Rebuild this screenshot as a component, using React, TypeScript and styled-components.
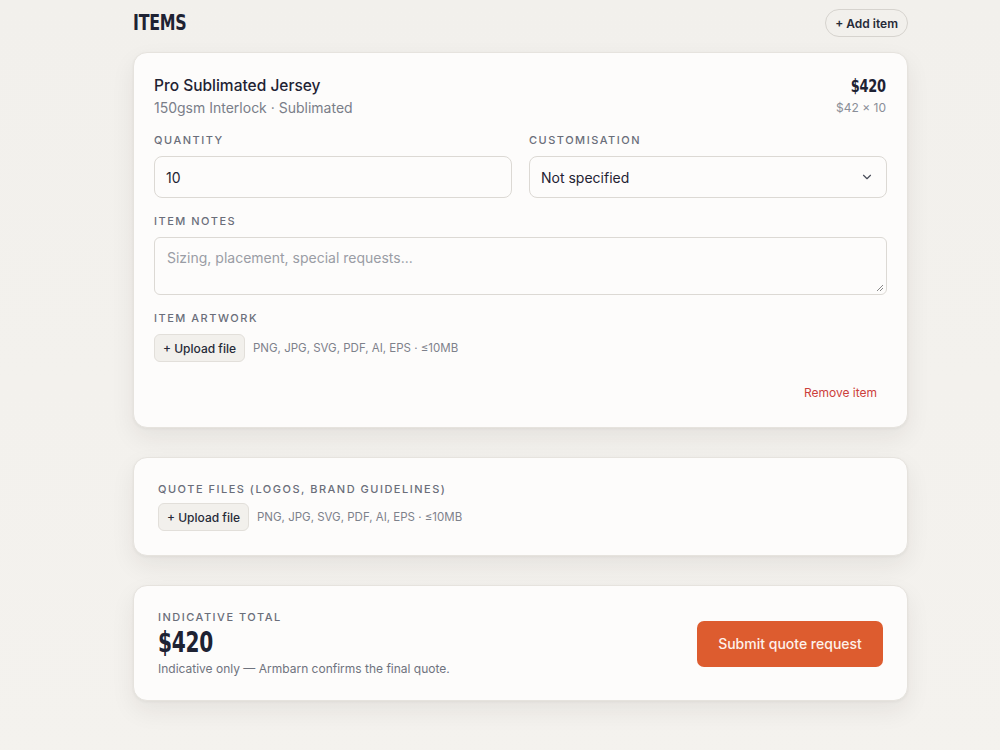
import * as React from 'react'
import styled, { createGlobalStyle } from 'styled-components'

const GlobalStyle = createGlobalStyle`
  html, body {
    margin: 0;
    padding: 0;
  }
  body {
    background: linear-gradient(180deg, #f2f0ec 0%, #f4f2ee 100%);
    font-family: 'Inter', 'Noto Sans', sans-serif;
    color: #1f2333;
    min-height: 750px;
  }
`

const Page = styled.div`
  width: 775px;
  margin: 0 0 0 133px;
  padding: 9px 0 40px 0;
  display: flex;
  flex-direction: column;
`

const Header = styled.div`
  display: flex;
  flex-direction: row;
  justify-content: space-between;
  align-items: center;
  height: 28px;
  margin-bottom: 15px;
`

// condensed display face, squeezed to match the narrow headline font
const Display = styled.span<{ $size: number; $origin: string }>`
  display: inline-block;
  font-family: 'DejaVu Sans Condensed', 'DejaVu Sans', sans-serif;
  font-stretch: condensed;
  font-weight: 700;
  font-size: ${p => p.$size}px;
  line-height: ${p => p.$size + 4}px;
  letter-spacing: -0.3px;
  color: #1e2233;
  transform: scaleX(0.8);
  transform-origin: ${p => p.$origin};
`

const PillButton = styled.button`
  font-family: 'Inter', sans-serif;
  font-size: 12px;
  font-weight: 600;
  color: #262a38;
  background: transparent;
  border: 1px solid #d6d3ce;
  border-radius: 999px;
  height: 28px;
  padding: 0 9px;
`

const Card = styled.div<{ $pad: number }>`
  background: #fdfcfb;
  border: 1px solid #e6e3de;
  border-radius: 14px;
  box-shadow: 0 10px 24px rgba(40, 35, 25, 0.07), 0 1px 3px rgba(40, 35, 25, 0.05);
  padding: ${p => p.$pad}px;
  margin-bottom: 29px;
  display: flex;
  flex-direction: column;
`

const ItemHead = styled.div`
  display: flex;
  justify-content: space-between;
  align-items: flex-start;
  margin-top: 2px;
`

const Title = styled.div`
  font-size: 15.5px;
  font-weight: 500;
  color: #1f2333;
  line-height: 22px;
`

const Sub = styled.div`
  font-size: 14px;
  color: #7a7e89;
  line-height: 20px;
  margin-top: 1px;
`

const PriceCol = styled.div`
  display: flex;
  flex-direction: column;
  align-items: flex-end;
  padding-right: 1px;
`

const PriceSub = styled.div`
  font-size: 12px;
  color: #8a8e98;
  margin-top: 3px;
`

const Grid = styled.div`
  display: grid;
  grid-template-columns: 1fr 1fr;
  gap: 17px;
  margin-top: 15px;
`

const Field = styled.div<{ $mt?: number }>`
  display: flex;
  flex-direction: column;
  margin-top: ${p => p.$mt || 0}px;
`

const Label = styled.div<{ $mb?: number }>`
  font-size: 11px;
  font-weight: 500;
  letter-spacing: 1.5px;
  text-transform: uppercase;
  color: #6a6e7a;
  line-height: 14px;
  margin-bottom: ${p => (p.$mb === undefined ? 9 : p.$mb)}px;
`

const Input = styled.div`
  height: 42px;
  box-sizing: border-box;
  border: 1px solid #dcd9d4;
  border-radius: 8px;
  background: #fdfcfb;
  display: flex;
  align-items: center;
  justify-content: space-between;
  padding: 0 12px 0 11px;
  font-size: 14px;
  color: #1f2333;
`

const TextArea = styled.div`
  height: 58px;
  box-sizing: border-box;
  border: 1px solid #dcd9d4;
  border-radius: 6px;
  padding: 11px 12px;
  font-size: 14px;
  color: #9a9da5;
  position: relative;
`

const Grip = styled.svg`
  position: absolute;
  right: 2px;
  bottom: 2px;
`

const UploadRow = styled.div`
  display: flex;
  align-items: center;
  gap: 8px;
`

const UploadButton = styled.button`
  font-family: 'Inter', sans-serif;
  font-size: 12px;
  font-weight: 500;
  color: #262a38;
  background: #f2f0ec;
  border: 1px solid #e2dfda;
  border-radius: 6px;
  height: 28px;
  padding: 0 8px;
`

const Hint = styled.span`
  font-size: 11.5px;
  color: #7d818b;
`

const Footer = styled.div`
  display: flex;
  justify-content: flex-end;
  margin-top: 23px;
  padding: 0 10px 7px 0;
`

const RemoveLink = styled.span`
  font-size: 12px;
  color: #cc3f3b;
`

const TotalRow = styled.div`
  display: flex;
  justify-content: space-between;
  align-items: center;
`

const Note = styled.div`
  font-size: 12px;
  color: #6f737e;
  margin-top: 2px;
`

const Submit = styled.button`
  font-family: 'Inter', sans-serif;
  font-size: 14px;
  font-weight: 500;
  color: #fdf1ea;
  background: #dd5c2f;
  border: none;
  border-radius: 7px;
  height: 46px;
  width: 186px;
  margin-top: 1px;
`

const App = () => {
  return (
    <>
      <GlobalStyle />
      <Page>
        <Header>
          <Display $size={22} $origin="left center">ITEMS</Display>
          <PillButton>+ Add item</PillButton>
        </Header>

        <Card $pad={20}>
          <ItemHead>
            <div>
              <Title>Pro Sublimated Jersey</Title>
              <Sub>150gsm Interlock · Sublimated</Sub>
            </div>
            <PriceCol>
              <Display $size={18} $origin="right center">$420</Display>
              <PriceSub>$42 × 10</PriceSub>
            </PriceCol>
          </ItemHead>

          <Grid>
            <Field>
              <Label>Quantity</Label>
              <Input>10</Input>
            </Field>
            <Field>
              <Label>Customisation</Label>
              <Input>
                Not specified
                <svg width="14" height="14" viewBox="0 0 24 24" fill="none" stroke="#4a4e5a" strokeWidth="2" strokeLinecap="round" strokeLinejoin="round">
                  <path d="m6 9 6 6 6-6" />
                </svg>
              </Input>
            </Field>
          </Grid>

          <Field $mt={16}>
            <Label>Item notes</Label>
            <TextArea>
              Sizing, placement, special requests...
              <Grip width="8" height="8" viewBox="0 0 8 8">
                <path d="M7 1 1 7M7 4 4 7" stroke="#888" strokeWidth="1" />
              </Grip>
            </TextArea>
          </Field>

          <Field $mt={16}>
            <Label>Item artwork</Label>
            <UploadRow>
              <UploadButton>+ Upload file</UploadButton>
              <Hint>PNG, JPG, SVG, PDF, AI, EPS · ≤10MB</Hint>
            </UploadRow>
          </Field>

          <Footer>
            <RemoveLink>Remove item</RemoveLink>
          </Footer>
        </Card>

        <Card $pad={24}>
          <Field>
            <Label $mb={7}>Quote files (logos, brand guidelines)</Label>
            <UploadRow>
              <UploadButton>+ Upload file</UploadButton>
              <Hint>PNG, JPG, SVG, PDF, AI, EPS · ≤10MB</Hint>
            </UploadRow>
          </Field>
        </Card>

        <Card $pad={24}>
          <TotalRow>
            <div>
              <Label $mb={3}>Indicative total</Label>
              <Display $size={28} $origin="left center">$420</Display>
              <Note>Indicative only — Armbarn confirms the final quote.</Note>
            </div>
            <Submit>Submit quote request</Submit>
          </TotalRow>
        </Card>
      </Page>
    </>
  )
}

export default App
